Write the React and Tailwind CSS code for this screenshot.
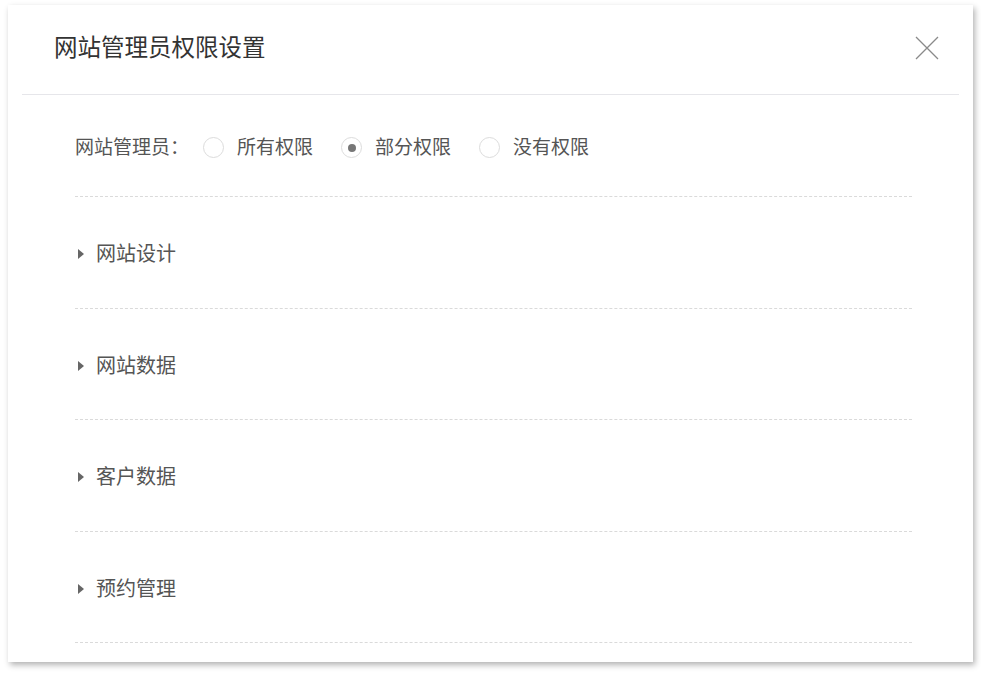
import React, { useState } from 'react';

const options = ['所有权限', '部分权限', '没有权限'];
const sections = ['网站设计', '网站数据', '客户数据', '预约管理'];

const Radio = ({ label, checked, onClick }) => (
  <button type="button" onClick={onClick} className="flex items-center gap-[13px] mr-[28px]">
    <span className="w-[21px] h-[21px] rounded-full border border-[#dcdcdc] flex items-center justify-center bg-white">
      {checked && <span className="w-[8px] h-[8px] rounded-full bg-[#777]" />}
    </span>
    <span>{label}</span>
  </button>
);

const App = () => {
  const [perm, setPerm] = useState(1);

  return (
    <div
      className="min-h-screen bg-white pt-[5px] pl-[8px]"
      style={{ fontFamily: '"Noto Sans", "Noto Sans CJK SC", sans-serif' }}
    >
      <div className="w-[965px] h-[657px] bg-white shadow-[2px_3px_6px_rgba(0,0,0,0.3)] overflow-hidden">
        <div className="mx-[14px] h-[90px] border-b border-[#e6e6ea] flex items-center justify-between pl-[32px] pr-[20px]">
          <h2 className="text-[23.5px] text-[#333] leading-none pb-[4px]">网站管理员权限设置</h2>
          <button type="button" className="w-[24px] h-[24px] flex items-center justify-center mb-[4px]">
            <svg width="24" height="24" viewBox="0 0 24 24" fill="none" stroke="#8a8a8a" strokeWidth="1.3">
              <path d="M1 1L23 23M23 1L1 23" />
            </svg>
          </button>
        </div>

        <div className="pl-[67px] pr-[61px] text-[#555]">
          <div className="flex items-center h-[102px] border-b border-dashed border-[#dadada] pt-[4px] text-[19px]">
            <span className="mr-[14px]">网站管理员：</span>
            {options.map((o, i) => (
              <Radio key={o} label={o} checked={perm === i} onClick={() => setPerm(i)} />
            ))}
          </div>

          {sections.map((s) => (
            <div key={s} className="flex items-center h-[111.5px] border-b border-dashed border-[#dadada] pt-[4px] text-[20px]">
              <span className="ml-[3px] mr-[12px] w-0 h-0 border-y-[5px] border-y-transparent border-l-[6px] border-l-[#666]" />
              <span>{s}</span>
            </div>
          ))}
        </div>
      </div>
    </div>
  );
};

export default App;
